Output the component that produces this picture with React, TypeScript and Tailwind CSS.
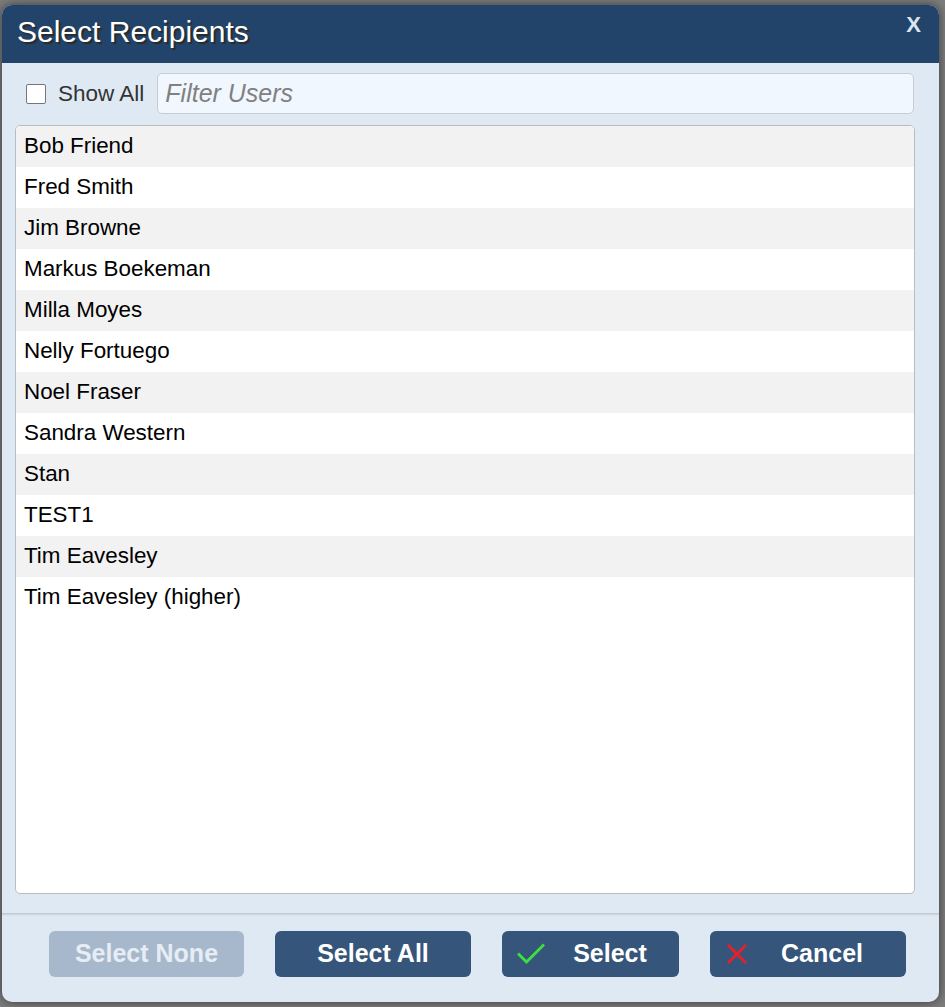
const users = [
  'Bob Friend',
  'Fred Smith',
  'Jim Browne',
  'Markus Boekeman',
  'Milla Moyes',
  'Nelly Fortuego',
  'Noel Fraser',
  'Sandra Western',
  'Stan',
  'TEST1',
  'Tim Eavesley',
  'Tim Eavesley (higher)',
]

function CheckIcon() {
  return (
    <svg width="28" height="22" viewBox="0 0 28 22" fill="none" aria-hidden="true">
      <path d="M2 11.5 L9.5 19 L26 2.5" stroke="#3ee03e" strokeWidth="3" strokeLinecap="square" />
    </svg>
  )
}

function CrossIcon() {
  return (
    <svg width="22" height="22" viewBox="0 0 22 22" fill="none" aria-hidden="true">
      <path d="M2 2 L20 20 M20 2 L2 20" stroke="#e3202c" strokeWidth="3" />
    </svg>
  )
}

export default function App() {
  return (
    <div className="h-[1007px] w-[945px] overflow-hidden bg-[#7c7c7c] pl-[2px] pt-[5px] font-['Liberation_Sans',Arial,sans-serif]">
      <div className="flex h-[997px] w-[937px] flex-col overflow-hidden rounded-[10px] bg-[#dfe9f3] shadow-[0_0_10px_rgba(0,0,0,0.55)]">
        {/* header */}
        <div className="flex h-[58px] shrink-0 items-center justify-between bg-[#23446a] pb-[5px] pl-[15px] pr-[18px]">
          <h1 className="text-[30px] leading-none text-white [text-shadow:2px_2px_1px_#2a2a2a]">Select Recipients</h1>
          <span className="-mt-[13px] text-[22px] font-bold leading-none text-[#dde5ef]">X</span>
        </div>

        {/* filter row */}
        <div className="mt-[10px] flex h-[41px] items-center pr-[25px]">
          <span className="ml-[24px] h-[20px] w-[20px] rounded-[2px] border border-[#767676] bg-white" />
          <span className="ml-[12px] text-[22.5px] text-[#333]">Show All</span>
          <div className="ml-[13px] flex h-[41px] flex-1 items-center rounded-[5px] border border-[#c8ccd0] bg-[#f0f7fe] px-[7px]">
            <span className="text-[25px] italic text-[#808080]">Filter Users</span>
          </div>
        </div>

        {/* list */}
        <div className="ml-[13px] mr-[24px] mt-[11px] h-[769px] shrink-0 overflow-hidden rounded-[5px] border border-[#bcbcbc] bg-white">
          {users.map((name, i) => (
            <div
              key={name}
              className={
                i % 2 === 0
                  ? 'flex h-[41px] items-center bg-[#f2f2f2] pb-[2px] pl-[8px] text-[22.4px] text-black'
                  : 'flex h-[41px] items-center bg-white pb-[2px] pl-[8px] text-[22.4px] text-black'
              }
            >
              {name}
            </div>
          ))}
        </div>

        {/* footer */}
        <div className="mt-[19px] h-[3px] shrink-0 bg-gradient-to-b from-[#bfc4c9] to-[#dfe9f3]" />
        <div className="flex gap-[31px] pl-[47px] pt-[15px]">
          <button className="h-[46px] w-[195px] rounded-[6px] bg-[#a8b8cc] text-[25px] font-bold text-[#e6edf4]">
            Select None
          </button>
          <button className="h-[46px] w-[196px] rounded-[6px] bg-[#36557a] text-[25px] font-bold text-white">
            Select All
          </button>
          <button className="flex h-[46px] w-[177px] items-center rounded-[6px] bg-[#36557a] pl-[15px] text-[25px] font-bold text-white">
            <CheckIcon />
            <span className="flex-1 pr-[4px] text-center">Select</span>
          </button>
          <button className="flex h-[46px] w-[196px] items-center rounded-[6px] bg-[#36557a] pl-[16px] text-[25px] font-bold text-white">
            <CrossIcon />
            <span className="flex-1 pr-[10px] text-center">Cancel</span>
          </button>
        </div>
      </div>
    </div>
  )
}
